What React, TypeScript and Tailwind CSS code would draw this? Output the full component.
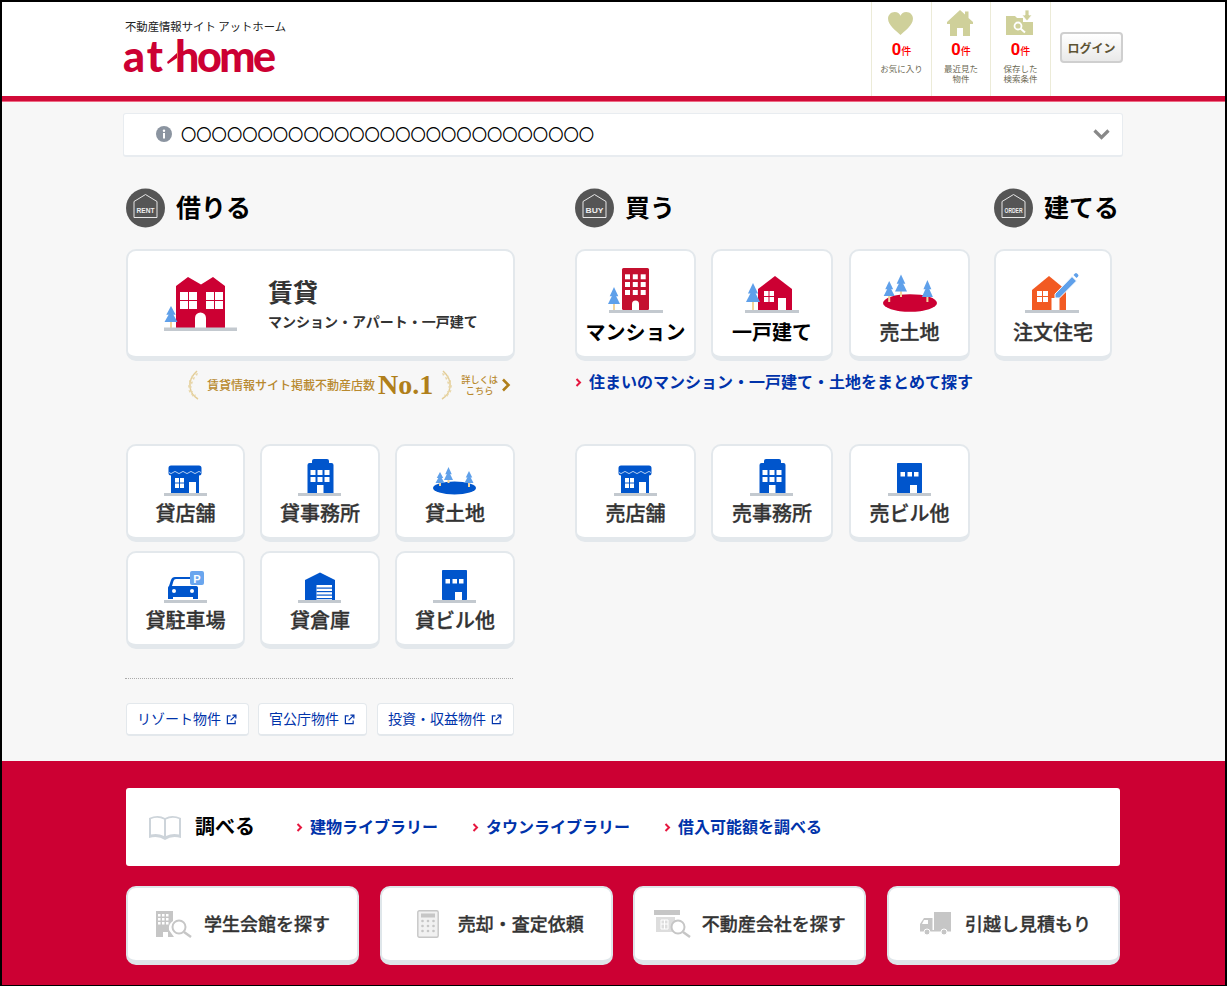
import React from "react";

const BLUE = "#0055cc";
const RED = "#cc0033";
const TREE = "#5fa0ea";
const TRUNK = "#f3d49b";
const GROUND = "#c3c9cf";

function Tree({ cx, top, w, h, base }: { cx: number; top: number; w: number; h: number; base: number }) {
  const mid = top + h * 0.55;
  return (
    <g>
      <rect x={cx - 1} y={top + h - 1} width={2} height={base - top - h + 1} fill={TRUNK} />
      <path d={`M${cx} ${top}L${cx + w * 0.36} ${mid}H${cx - w * 0.36}Z`} fill={TREE} />
      <path d={`M${cx} ${top + h * 0.28}L${cx + w / 2} ${top + h}H${cx - w / 2}Z`} fill={TREE} />
    </g>
  );
}

function Cross({ x, y, w, h }: { x: number; y: number; w: number; h: number }) {
  return (
    <g fill="#fff">
      <rect x={x} y={y} width={w / 2 - 0.5} height={h / 2 - 0.5} />
      <rect x={x + w / 2 + 0.5} y={y} width={w / 2 - 0.5} height={h / 2 - 0.5} />
      <rect x={x} y={y + h / 2 + 0.5} width={w / 2 - 0.5} height={h / 2 - 0.5} />
      <rect x={x + w / 2 + 0.5} y={y + h / 2 + 0.5} width={w / 2 - 0.5} height={h / 2 - 0.5} />
    </g>
  );
}

function Grid({ xs, ys, s, sy }: { xs: number[]; ys: number[]; s: number; sy?: number }) {
  return (
    <g fill="#fff">
      {ys.map((y) => xs.map((x) => <rect key={`${x}-${y}`} x={x} y={y} width={s} height={sy ?? s} />))}
    </g>
  );
}

const SmallSvg = ({ children }: { children: React.ReactNode }) => (
  <svg width="44" height="40" viewBox="0 0 44 40" className="block">
    <rect x="0" y="37" width="43" height="3" fill={GROUND} />
    {children}
  </svg>
);

const StoreIcon = () => (
  <SmallSvg>
    <rect x="7" y="18" width="28" height="19" fill={BLUE} />
    <path d="M7 9.500h28a2.500 2.500 0 0 1 2.500 2.500v5a2.500 2.500 0 0 1-2.500 2.500H7a2.500 2.500 0 0 1-2.500-2.500v-5A2.500 2.500 0 0 1 7 9.500Z" fill={BLUE} />
    <path d="M5 16.500q2 2.200 4 0t4 0t4 0t4 0t4 0t4 0t4 0t4 0" fill="none" stroke="#fff" strokeWidth="0.700" />
    <Cross x={11} y={22} w={9} h={10} />
    <rect x="25" y="26" width="7" height="11" fill="#fff" />
  </SmallSvg>
);

const OfficeIcon = () => (
  <SmallSvg>
    <path d="M9.500 37V9q0-2 2-2H14V5q0-2 2-2h13q2 0 2 2v2h2.500q2 0 2 2v28Z" fill={BLUE} />
    <Grid xs={[12.500, 19.500, 26.500]} ys={[14, 21]} s={5} />
    <rect x="19" y="29" width="6.500" height="8" fill="#fff" />
  </SmallSvg>
);

const LandIcon = () => (
  <svg width="44" height="40" viewBox="0 0 44 40" className="block">
    <ellipse cx="21.500" cy="32" rx="21.500" ry="6.500" fill={BLUE} />
    <Tree cx={7} top={16} w={9} h={11} base={30} />
    <Tree cx={15.500} top={11} w={9} h={13} base={27} />
    <Tree cx={36} top={15} w={9} h={12} base={31} />
  </svg>
);

const ParkingIcon = () => (
  <SmallSvg>
    <path d="M4 36V27q0-2 1-4l2-6q1-3 4-3h17v2H12q-2 0-2.500 2L8 23H32q2 1 2 4v9h-5v-3H9v3Z" fill={BLUE} />
    <rect x="4" y="23" width="30" height="11" rx="2" fill={BLUE} />
    <circle cx="10" cy="28" r="2" fill="#fff" />
    <circle cx="28" cy="28" r="2" fill="#fff" />
    <rect x="26" y="8" width="14" height="14" rx="2" fill="#6aa6ee" />
    <text x="33" y="19.500" textAnchor="middle" fontSize="11" fontWeight="700" fill="#fff" fontFamily="Liberation Sans">P</text>
  </SmallSvg>
);

const GarageIcon = () => (
  <SmallSvg>
    <path d="M7 37V17L22 9.500L37 17V37Z" fill={BLUE} />
    <rect x="18.500" y="22" width="15.500" height="15" fill="#fff" />
    <g fill={BLUE}>
      <rect x="18.500" y="24.500" width="15.500" height="1.200" />
      <rect x="18.500" y="28" width="15.500" height="1.200" />
      <rect x="18.500" y="31.500" width="15.500" height="1.200" />
      <rect x="18.500" y="35" width="15.500" height="1.200" />
    </g>
  </SmallSvg>
);

const BuildingIcon = () => (
  <SmallSvg>
    <rect x="9" y="7" width="25" height="30" rx="0.800" fill={BLUE} />
    <Grid xs={[12.500, 19.500, 26]} ys={[16]} s={4.500} />
    <rect x="22" y="29" width="7" height="8" fill="#fff" />
  </SmallSvg>
);

const TallSvg = ({ w, children }: { w: number; children: React.ReactNode }) => (
  <svg width={w} height="50" viewBox={`0 0 ${w} 50`} className="block">
    {children}
  </svg>
);

const MansionIcon = () => (
  <TallSvg w={56}>
    <rect x="1" y="46" width="54" height="3" fill={GROUND} />
    <rect x="14" y="4" width="27" height="42" rx="1.500" fill="#c4102f" />
    <Grid xs={[17, 24.800, 32.700]} ys={[10.300, 18, 26]} s={5} />
    <path d="M24 46v-6a3.500 3.500 0 0 1 7 0v6Z" fill="#fff" />
    <Tree cx={6} top={23} w={12} h={17} base={46} />
  </TallSvg>
);

const HouseIcon = () => (
  <TallSvg w={55}>
    <rect x="0" y="46" width="54" height="3" fill={GROUND} />
    <path d="M13 46V25L30 12L47 25V46Z" fill={RED} />
    <Cross x={19} y={27} w={10} h={11} />
    <rect x="33" y="34" width="8" height="12" fill="#fff" />
    <Tree cx={8} top={19} w={14} h={19} base={46} />
  </TallSvg>
);

const RedLandIcon = () => (
  <TallSvg w={54}>
    <ellipse cx="27" cy="39" rx="27" ry="8.800" fill={RED} />
    <Tree cx={6.200} top={17} w={11} h={15} base={38} />
    <Tree cx={18} top={10.500} w={12} h={17} base={33} />
    <Tree cx={44.400} top={16} w={11} h={17} base={38} />
  </TallSvg>
);

const OrderIcon = () => (
  <TallSvg w={56}>
    <rect x="0" y="46" width="54" height="3" fill={GROUND} />
    <path d="M7 46V26L24 12L41 26V46Z" fill="#f25a22" />
    <Cross x={12} y={27} w={11} h={11} />
    <rect x="26.500" y="34" width="8" height="12" fill="#fff" />
    <path d="M30 30L47 12.500L51.500 17L34.500 34H30Z" fill={TREE} stroke="#fff" strokeWidth="1" />
    <path d="M48.500 11L50 9.500Q51 8.500 52 9.500L53 10.500Q54 11.500 53 12.500L51.500 14Z" fill={TREE} />
  </TallSvg>
);

const BigIcon = () => (
  <svg width="74" height="56" viewBox="0 0 74 56" className="block">
    <path d="M12 10L24 1L37 8.500L49 1L61 10V52H12Z" fill={RED} />
    <Cross x={16} y={16} w={17} h={17} />
    <Cross x={42} y={16} w={17} h={17} />
    <path d="M31 52V42a5.500 5.500 0 0 1 11 0v10Z" fill="#fff" />
    <Tree cx={7} top={30} w={13} h={16} base={52} />
    <rect x="0" y="51.500" width="73" height="3.500" fill={GROUND} />
  </svg>
);

const LABEL = "[-webkit-text-stroke:0.3px_#333] font-medium text-[#333]";

const SmallCard = ({ icon, label, w }: { icon: React.ReactNode; label: string; w: string }) => (
  <a className={`flex h-[98px] flex-col items-center rounded-[10px] border-2 border-b-[5px] border-[#e3e8ec] bg-white pt-[10px] ${w}`}>
    {icon}
    <span className={`mt-[3px] text-[20px] leading-[28px] ${LABEL}`}>{label}</span>
  </a>
);

const TallCard = ({ icon, label, w, bold }: { icon: React.ReactNode; label: string; w: string; bold?: boolean }) => (
  <a className={`flex h-[112px] flex-col items-center rounded-[10px] border-2 border-b-[5px] border-[#e3e8ec] bg-white pt-[13px] ${w}`}>
    {icon}
    <span className={`mt-[4px] text-[20px] leading-[28px] ${bold ? "font-bold text-black" : LABEL}`}>{label}</span>
  </a>
);

const Heading = ({ code, label }: { code: string; label: string }) => (
  <div className="flex h-[40px] items-center gap-[10px]">
    <svg width="40" height="40" viewBox="0 0 40 40" className="block shrink-0">
      <circle cx="19.500" cy="20" r="19.500" fill="#555" />
      <path d="M8 13.500L19.500 6.500L31 13.500V29.500H8Z" fill="none" stroke="#e8e8e8" strokeWidth="1" />
      <text x="19.500" y="24.500" textAnchor="middle" fontSize="8" fontWeight="700" fill="#eee" fontFamily="Liberation Sans" textLength="18" lengthAdjust="spacingAndGlyphs">{code}</text>
    </svg>
    <span className="pb-[4px] text-[25px] leading-[36px] font-bold text-black">{label}</span>
  </div>
);

const Chev = () => (
  <svg width="7" height="9" viewBox="0 0 7 9" className="block shrink-0">
    <path d="M1.500 1L5 4.500L1.500 8" fill="none" stroke="#e6173f" strokeWidth="2" />
  </svg>
);

const Ext = () => (
  <svg width="11" height="11" viewBox="0 0 12 12" className="block shrink-0">
    <path d="M5 2H1.500V10.500H10V7" fill="none" stroke="#0033aa" strokeWidth="1.300" />
    <path d="M5 7L10.500 1.500M7 1.200H10.800V5" fill="none" stroke="#0033aa" strokeWidth="1.300" />
  </svg>
);

const ExtButton = ({ label, className = "" }: { label: string; className?: string }) => (
  <a className={`flex h-[33px] items-center gap-[5px] rounded-[4px] border border-b-2 border-[#e3e8ec] bg-white pr-[11px] pl-[10px] text-[14px] whitespace-nowrap text-[#0033aa] ${className}`}>
    <span className="pb-[2px]">{label}</span>
    <Ext />
  </a>
);

const HeaderCell = ({ icon, lines, w }: { icon: React.ReactNode; lines: string[]; w: string }) => (
  <div className={`flex flex-col items-center border-l border-[#ecebd8] pt-[7px] ${w}`}>
    <div className="flex h-[28px] items-center justify-center pr-[2px]">{icon}</div>
    <div className="mt-[3px] flex h-[20px] items-baseline text-[#ff0000]">
      <span className="font-['Liberation_Sans',sans-serif] text-[17px] leading-[20px] font-bold">0</span>
      <span className="text-[10px] leading-[20px] font-medium">件</span>
    </div>
    <div className="mt-[3px] text-center text-[8.500px] leading-[10px] text-[#6d6a55]">
      {lines.map((l) => (
        <div key={l}>{l}</div>
      ))}
    </div>
  </div>
);

const Laurel = ({ flip }: { flip?: boolean }) => (
  <svg width="12" height="30" viewBox="0 0 12 30" className={`block shrink-0 ${flip ? "-scale-x-100" : ""}`}>
    <path d="M10 1Q2 8 3 17Q4 25 11 29" fill="none" stroke="#e3cd97" strokeWidth="1.500" />
    <g fill="#e8d6a8">
      <path d="M8 4l3-1-1 3ZM5 8l3-1-1 3ZM3 12l3-.5-1 3ZM2 16l3 .5-1.500 2.500ZM3 21l3 0-1.500 2.500ZM6 25l3-.5-1 2.500Z" />
      <path d="M5 5l-1 3 2-1ZM2 10l0 3 2-2ZM1 15l.5 3 1.500-2ZM1.500 20l1 3 1-2.500ZM4 24l2 3 0-3Z" />
    </g>
  </svg>
);

const LinkItem = ({ label }: { label: string }) => (
  <a className="flex items-center gap-[7px] text-[16px] leading-[22px] font-bold whitespace-nowrap text-[#0033aa]">
    <Chev />
    <span className="pb-[2px]">{label}</span>
  </a>
);

const FootButton = ({ icon, label }: { icon: React.ReactNode; label: string }) => (
  <a className={`flex h-[79px] w-[233px] items-center justify-center gap-[11px] rounded-[10px] border-2 border-b-[5px] border-[#dfe6ea] bg-white text-[18px] ${LABEL}`}>
    {icon}
    <span className="pb-[2px]">{label}</span>
  </a>
);

const G = "#c6c6c6";

export default function App() {
  return (
    <div className="box-border flex h-[986px] w-full flex-col overflow-hidden border-x-2 border-t-2 border-b border-black bg-[#f7f7f7] [font-family:'Noto_Sans_CJK_JP',sans-serif]">
      <header className="h-[94px] shrink-0 bg-white">
        <div className="ml-[121px] flex h-full w-[1000px] justify-between">
          <div className="pl-[2px]">
            <div className="mt-[16px] text-[11.350px] leading-[16px] whitespace-nowrap text-[#222]">不動産情報サイト アットホーム</div>
            <div className="relative -ml-[2px] mt-[5px] flex h-[34px] items-end font-['Lato',sans-serif] text-[43px] leading-[34px] font-black text-[#cc0033]">
              <span className="w-[52px] tracking-[2px]">at</span>
              <span className="tracking-[-2.500px]">home</span>
              <svg width="11" height="11" viewBox="0 0 11 11" className="absolute top-[14px] left-[44px] block">
                <path d="M10 0V5L1 11L0 9Z" fill="#cc0033" />
              </svg>
            </div>
          </div>
          <div className="flex">
            <HeaderCell
              w="w-[60px]"
              lines={["お気に入り"]}
              icon={
                <svg width="25" height="23" viewBox="0 0 26 24">
                  <path d="M13 24C9 20 0 14 0 7C0 3 3 0 7 0C10 0 12 1.500 13 4C14 1.500 16 0 19 0C23 0 26 3 26 7C26 14 17 20 13 24Z" fill="#cfd09a" />
                </svg>
              }
            />
            <HeaderCell
              w="w-[59px]"
              lines={["最近見た", "物件"]}
              icon={
                <svg width="26" height="26" viewBox="0 0 26 26">
                  <path d="M13 0L18 4.500V1.500H21.500V8L26 12V14H23V26H16V18H10V26H3V14H0V12Z" fill="#cfd09a" />
                </svg>
              }
            />
            <HeaderCell
              w="w-[60px]"
              lines={["保存した", "検索条件"]}
              icon={
                <svg width="27" height="27" viewBox="0 0 27 27">
                  <path d="M0 6H9L11 8H17V12H27V25H0Z" fill="#cfd09a" />
                  <path d="M19 0H23V5H26L21 11L16 5H19Z" fill="#cfd09a" stroke="#fff" strokeWidth="0.800" />
                  <circle cx="12" cy="16" r="3.500" fill="none" stroke="#fff" strokeWidth="1.800" />
                  <path d="M14.500 18.500L19 22.500" stroke="#fff" strokeWidth="2" />
                </svg>
              }
            />
            <div className="flex border-l border-[#ecebd8] pl-[9px] pt-[30px]">
              <button className="h-[31px] w-[63px] rounded-[4px] border-2 border-[#cfcfcf] bg-gradient-to-b from-white to-[#e9e9e9] text-[12px] font-bold whitespace-nowrap text-[#5d5334]">
                ログイン
              </button>
            </div>
          </div>
        </div>
      </header>
      <div className="h-[6px] shrink-0 border-b border-[#ee6a85] bg-[#d10a38]" />

      <main className="ml-[121px] w-[1000px] shrink-0">
        <div className="mt-[11px] flex h-[44px] items-center rounded-[3px] border border-b-2 border-[#e8ecf0] bg-white pr-[12px] pb-[2px] pl-[32px]">
          <svg width="16" height="16" viewBox="0 0 16 16" className="block shrink-0">
            <circle cx="8" cy="8" r="8" fill="#8b94a0" />
            <rect x="7" y="7" width="2" height="5.500" fill="#fff" />
            <circle cx="8" cy="4.700" r="1.200" fill="#fff" />
          </svg>
          <span className="ml-[9px] pb-[2px] text-[15.300px] leading-[20px] text-black">〇〇〇〇〇〇〇〇〇〇〇〇〇〇〇〇〇〇〇〇〇〇〇〇〇〇〇</span>
          <svg width="17" height="11" viewBox="0 0 17 11" className="mt-[2px] ml-auto block">
            <path d="M1.500 1.500L8.500 8.500L15.500 1.500" fill="none" stroke="#888" strokeWidth="3.200" />
          </svg>
        </div>

        <div className="mt-[31px] flex pl-[3px]">
          <section className="w-[389px]">
            <Heading code="RENT" label="借りる" />
            <a className="mt-[21px] flex h-[112px] items-center rounded-[10px] border-2 border-b-[5px] border-[#e3e8ec] bg-white pl-[36px]">
              <BigIcon />
              <div className="-mt-[2px] ml-[30px]">
                <div className="text-[25px] leading-[32px] font-bold text-[#333]">賃貸</div>
                <div className="mt-[4px] text-[14px] leading-[20px] font-bold whitespace-nowrap text-[#333]">マンション・アパート・一戸建て</div>
              </div>
            </a>
            <div className="mt-[9px] flex h-[30px] items-center pl-[61px]">
              <Laurel />
              <span className="ml-[8px] text-[12px] font-medium whitespace-nowrap text-[#b8892e]">賃貸情報サイト掲載不動産店数</span>
              <span className="ml-[3px] font-['Liberation_Serif',serif] text-[28px] leading-[30px] font-bold text-[#b07f1a]">No.1</span>
              <span className="ml-[8px]"><Laurel flip /></span>
              <span className="ml-[8px] text-center text-[9.200px] leading-[11px] font-medium whitespace-nowrap text-[#b8892e]">
                詳しくは
                <br />
                こちら
              </span>
              <svg width="10" height="14" viewBox="0 0 10 14" className="ml-[3px] block">
                <path d="M2 1.500L7.500 7L2 12.500" fill="none" stroke="#b07f1a" strokeWidth="2.600" />
              </svg>
            </div>
            <div className="mt-[44px] grid grid-cols-[119px_120px_120px] gap-x-[15px] gap-y-[9px]">
              <SmallCard w="w-[119px]" icon={<StoreIcon />} label="貸店舗" />
              <SmallCard w="w-[120px]" icon={<OfficeIcon />} label="貸事務所" />
              <SmallCard w="w-[120px]" icon={<LandIcon />} label="貸土地" />
              <SmallCard w="w-[119px]" icon={<ParkingIcon />} label="貸駐車場" />
              <SmallCard w="w-[120px]" icon={<GarageIcon />} label="貸倉庫" />
              <SmallCard w="w-[120px]" icon={<BuildingIcon />} label="貸ビル他" />
            </div>
            <div className="mt-[29px] -ml-px w-[388px] border-t border-dotted border-[#aaa]" />
            <div className="mt-[24px] flex gap-[9px]">
              <ExtButton label="リゾート物件" />
              <ExtButton label="官公庁物件" />
              <ExtButton label="投資・収益物件" className="ml-px" />
            </div>
          </section>

          <section className="ml-[60px] w-[395px]">
            <Heading code="BUY" label="買う" />
            <div className="mt-[21px] flex gap-[15px]">
              <TallCard icon={<MansionIcon />} label="マンション" w="w-[121px]" bold />
              <TallCard icon={<HouseIcon />} label="一戸建て" w="w-[122px]" bold />
              <TallCard icon={<RedLandIcon />} label="売土地" w="ml-px w-[121px]" />
            </div>
            <div className="mt-[9px] h-[22px]">
              <LinkItem label="住まいのマンション・一戸建て・土地をまとめて探す" />
            </div>
            <div className="mt-[52px] flex gap-[15px]">
              <SmallCard w="w-[121px]" icon={<StoreIcon />} label="売店舗" />
              <SmallCard w="w-[122px]" icon={<OfficeIcon />} label="売事務所" />
              <SmallCard w="ml-px w-[121px]" icon={<BuildingIcon />} label="売ビル他" />
            </div>
          </section>

          <section className="ml-[24px]">
            <Heading code="ORDER" label="建てる" />
            <div className="mt-[21px]">
              <TallCard icon={<OrderIcon />} label="注文住宅" w="w-[118px]" />
            </div>
          </section>
        </div>
      </main>

      <footer className="mt-[25px] flex-1 bg-[#cc0033] pt-[27px]">
        <div className="ml-[124px] w-[994px]">
          <div className="flex h-[78px] items-center rounded-[3px] bg-white pl-[23px]">
            <svg width="32" height="25" viewBox="0 0 32 25" className="block shrink-0">
              <path d="M0 3Q9 -1 16 3Q23 -1 32 3V23Q23 20 16 25Q9 20 0 23Z" fill="#cdd4da" />
              <path d="M2 4Q9 1.500 15 4.500V21Q9 18 2 19.500ZM30 4Q23 1.500 17 4.500V21Q23 18 30 19.500Z" fill="#fff" />
            </svg>
            <span className="ml-[14px] pb-[2px] text-[20px] leading-[28px] font-bold text-black">調べる</span>
            <div className="ml-[41px] flex gap-[34px]">
              <LinkItem label="建物ライブラリー" />
              <LinkItem label="タウンライブラリー" />
              <LinkItem label="借入可能額を調べる" />
            </div>
          </div>
          <div className="mt-[20px] flex justify-between">
            <FootButton
              label="学生会館を探す"
              icon={
                <svg width="38" height="28" viewBox="0 0 38 28" className="block">
                  <path d="M1 1H18V11Q13 14 14 20L19 27H13V22H8V27H1Z" fill={G} />
                  <Grid xs={[3, 7, 11]} ys={[4, 8, 12]} s={2.500} />
                  <circle cx="24" cy="17" r="6.500" fill="none" stroke={G} strokeWidth="2" />
                  <path d="M29 22L36 27" stroke={G} strokeWidth="2.500" />
                </svg>
              }
            />
            <FootButton
              label="売却・査定依頼"
              icon={
                <svg width="22" height="28" viewBox="0 0 22 28" className="mx-[8px] block">
                  <rect x="0.800" y="0.800" width="20.400" height="26.400" rx="1.500" fill="#f1f1f1" stroke={G} strokeWidth="1.400" />
                  <rect x="4" y="3.500" width="14" height="4" fill={G} />
                  <g fill={G}>
                    {[11, 16, 21].map((y) => [5.500, 11, 16.500].map((x) => <circle key={`${x}-${y}`} cx={x} cy={y} r="1.300" />))}
                  </g>
                </svg>
              }
            />
            <FootButton
              label="不動産会社を探す"
              icon={
                <svg width="37" height="28" viewBox="0 0 37 28" className="block">
                  <rect x="0" y="0" width="26" height="5" fill={G} />
                  <rect x="2" y="7" width="19" height="15" fill="#ddd" />
                  <path d="M7 10H14V19H7ZM10.500 10V19M7 14H14" fill="none" stroke="#fff" strokeWidth="1" />
                  <circle cx="24" cy="17" r="6.500" fill="#fff" stroke={G} strokeWidth="2" />
                  <path d="M29 22L36 27" stroke={G} strokeWidth="2.500" />
                </svg>
              }
            />
            <FootButton
              label="引越し見積もり"
              icon={
                <svg width="31" height="24" viewBox="0 0 31 24" className="mr-[3px] ml-[4px] block">
                  <rect x="14" y="0" width="17" height="18" fill={G} />
                  <path d="M12.500 6V18H0V12L4 6Z" fill={G} />
                  <path d="M4 8H8V12H2Z" fill="#fff" />
                  <rect x="0" y="18" width="31" height="1.500" fill={G} />
                  <circle cx="7" cy="20" r="3" fill={G} stroke="#fff" strokeWidth="1" />
                  <circle cx="24" cy="20" r="3" fill={G} stroke="#fff" strokeWidth="1" />
                </svg>
              }
            />
          </div>
        </div>
      </footer>
    </div>
  );
}
